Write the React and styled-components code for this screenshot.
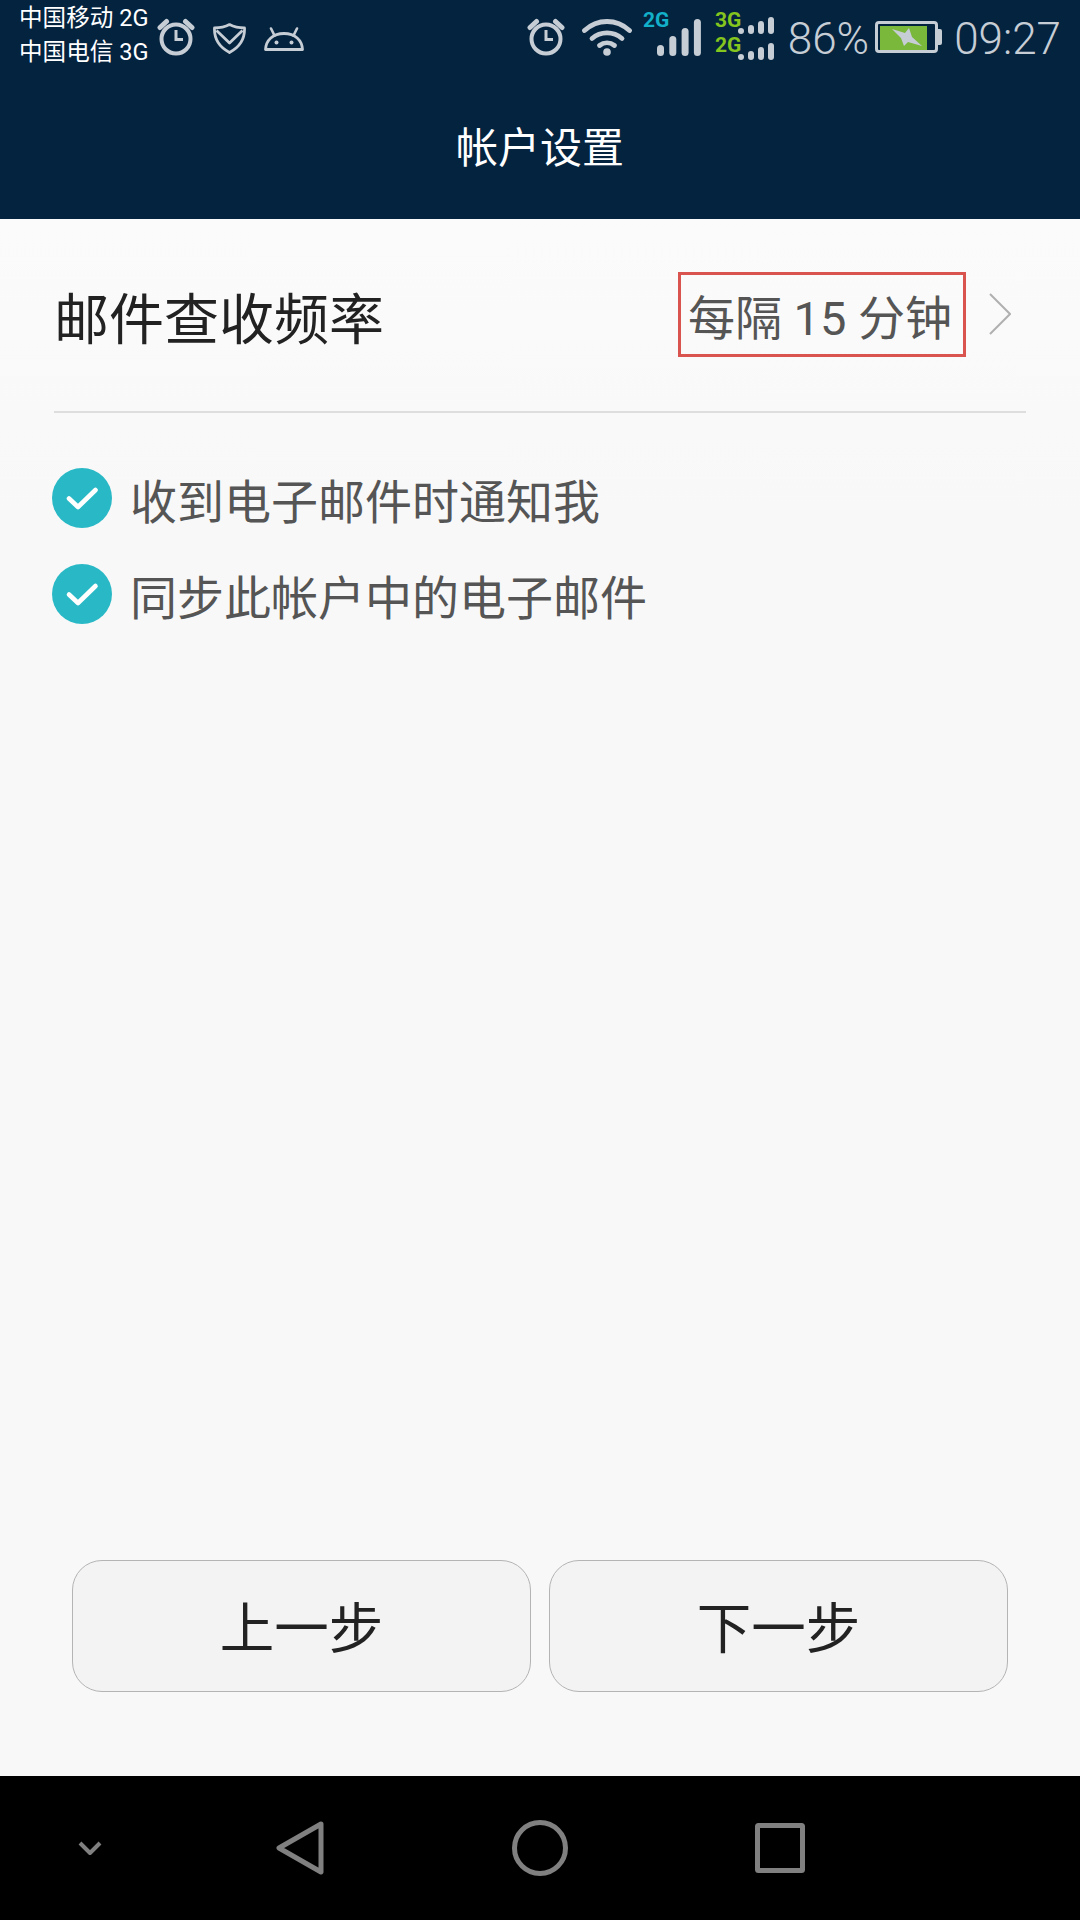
import React from 'react';
import styled, { createGlobalStyle } from 'styled-components';

const GlobalStyle = createGlobalStyle`
  html, body {
    margin: 0;
    padding: 0;
    background: #000;
  }
  body {
    font-family: Roboto, "Noto Sans CJK SC", sans-serif;
  }
`;

const Page = styled.div`
  width: 1080px;
  height: 1920px;
  display: flex;
  flex-direction: column;
  overflow: hidden;
`;

const Header = styled.header`
  height: 219px;
  flex: none;
  background: #04233f;
  color: #fff;
`;

const StatusBar = styled.div`
  height: 80px;
  box-sizing: border-box;
  padding: 0 19px;
  display: flex;
  justify-content: space-between;
  align-items: flex-start;
  color: #c6cdd5;
`;

const StatusGroup = styled.div`
  display: flex;
  align-items: flex-start;
`;

const Carriers = styled.div`
  width: 129px;
  margin-top: 1px;
  margin-right: 9px;
  color: #fff;
  font-size: 23.6px;
  line-height: 34px;
  white-space: nowrap;
`;

const StatusIcon = styled.svg`
  display: block;
  flex: none;
  margin-top: ${p => p.$top}px;
  margin-left: ${p => p.$left || 0}px;
`;

const StatusText = styled.div`
  margin-top: 15px;
  margin-left: ${p => p.$left || 0}px;
  font-size: 44px;
  line-height: 48px;
  font-weight: 300;
  white-space: nowrap;
`;

const Title = styled.h1`
  margin: 0;
  height: 128px;
  display: flex;
  align-items: center;
  justify-content: center;
  font-size: 42px;
  font-weight: 400;
`;

const Content = styled.main`
  flex: 1;
  display: flex;
  flex-direction: column;
  background: linear-gradient(#fbfbfb, #f8f8f8 300px);
`;

const FrequencyRow = styled.div`
  height: 194px;
  box-sizing: border-box;
  margin: 0 54px;
  border-bottom: 2px solid #dedede;
  display: flex;
  align-items: center;
  justify-content: space-between;
  padding: 0 15px 1px 0;
`;

const RowLabel = styled.div`
  font-size: 55px;
  color: #222;
`;

const RowValue = styled.div`
  display: flex;
  align-items: center;
  gap: 23px;
`;

const ValueBox = styled.div`
  width: 288px;
  height: 85px;
  box-sizing: border-box;
  border: 3px solid #d9534f;
  padding-right: 4px;
  display: flex;
  align-items: center;
  justify-content: center;
  font-size: 47px;
  color: #555;
  white-space: pre;
`;

const Chevron = styled.svg`
  display: block;
  margin-top: -2px;
`;

const Options = styled.div`
  padding: 37px 0 0 52px;
`;

const Option = styled.div`
  height: 96px;
  display: flex;
  align-items: center;
  gap: 18px;
  font-size: 47px;
  color: #555;
`;

const Footer = styled.div`
  margin-top: auto;
  padding: 0 72px 84px;
  display: flex;
  gap: 18px;
`;

const StepButton = styled.button`
  flex: 1;
  height: 132px;
  box-sizing: border-box;
  border: 1.5px solid #b4b4b4;
  border-radius: 30px;
  background: #f3f3f3;
  color: #222;
  font-family: inherit;
  font-size: 54.5px;
  padding: 0 0 4px;
`;

const NavBar = styled.nav`
  height: 144px;
  flex: none;
  background: #000;
  display: flex;
  align-items: center;
  color: #808080;
  padding-left: 77px;
`;

const NavIcon = styled.svg`
  display: block;
  flex: none;
  margin-left: ${p => p.$left || 0}px;
`;

const AlarmIcon = props => (
  <StatusIcon width="38" height="38" viewBox="0 0 38 38" fill="none" stroke="currentColor" {...props}>
    <circle cx="19" cy="21" r="14.5" strokeWidth="4" />
    <path d="M19 12v9.5h7" strokeWidth="3" />
    <path d="M3 9.5 9.5 3.5M35 9.5 28.5 3.5" strokeWidth="5" strokeLinecap="round" />
  </StatusIcon>
);

const ShieldIcon = props => (
  <StatusIcon width="33" height="31" viewBox="0 0 33 31" fill="none" stroke="currentColor" strokeWidth="2.8" strokeLinejoin="round" {...props}>
    <path d="M16.5 1.6C22 4.500 27 5 31.500 5c.4 9.500-3.500 18.500-15 24.500C5 23.500 1.100 14.500 1.500 5 6 5 11 4.500 16.500 1.600Z" />
    <path d="M3.500 7.500 16.500 20 29.500 7.500" />
  </StatusIcon>
);

const AndroidIcon = props => (
  <StatusIcon width="40" height="24" viewBox="0 0 40 24" fill="none" {...props}>
    <path d="M1.500 22.500C2 13 9 6.500 20 6.500s18 6.500 18.500 16Z" stroke="currentColor" strokeWidth="2.800" strokeLinejoin="round" />
    <path d="M10.500 8.500 7 1.500M29.500 8.500 33 1.500" stroke="currentColor" strokeWidth="2.600" strokeLinecap="round" />
    <circle cx="12.500" cy="15.500" r="2" fill="currentColor" />
    <circle cx="27.500" cy="15.500" r="2" fill="currentColor" />
  </StatusIcon>
);

const WifiIcon = props => (
  <StatusIcon width="50" height="37" viewBox="0 0 50 37" fill="none" stroke="currentColor" strokeWidth="4.800" strokeLinecap="round" {...props}>
    <path d="M2.500 11.500C15.500-0.500 34.500-0.500 47.500 11.500" />
    <path d="M10 19.500C18.500 12 31.500 12 40 19.500" />
    <path d="M17.500 26.500C22 23 28 23 32.500 26.500" />
    <circle cx="25" cy="33" r="3.800" fill="currentColor" stroke="none" />
  </StatusIcon>
);

const SignalLabel = styled.text`
  font-family: Roboto, sans-serif;
  font-size: 21px;
  font-weight: 700;
  fill: ${p => p.$color};
`;

const Bars = ({ x, bottom, width, step, heights }) =>
  heights.map((h, i) => (
    <rect
      key={i}
      x={x + i * step}
      y={bottom - h}
      width={width}
      height={h}
      rx={width / 2}
      fill="currentColor"
    />
  ));

const SingleSignal = props => (
  <StatusIcon width="58" height="48" viewBox="0 0 58 48" {...props}>
    <SignalLabel x="0" y="19" $color="#12b0c9">2G</SignalLabel>
    <Bars x={14} bottom={48} width={7} step={12.300} heights={[11, 20, 28, 37]} />
  </StatusIcon>
);

const DualSignal = props => (
  <StatusIcon width="60" height="52" viewBox="0 0 60 52" {...props}>
    <SignalLabel x="0" y="19" $color="#84c51e">3G</SignalLabel>
    <SignalLabel x="0" y="44" $color="#84c51e">2G</SignalLabel>
    <Bars x={23} bottom={26} width={6} step={10} heights={[6, 9, 13, 17]} />
    <Bars x={23} bottom={52} width={6} step={10} heights={[6, 9, 13, 17]} />
  </StatusIcon>
);

const BatteryIcon = props => (
  <StatusIcon width="67" height="32" viewBox="0 0 67 32" {...props}>
    <rect x="1.500" y="1.500" width="60" height="29" rx="2.500" fill="none" stroke="currentColor" strokeWidth="3" />
    <rect x="5" y="5" width="47" height="24" fill="#7ab83c" />
    <path d="M63 8h2a2 2 0 0 1 2 2v12a2 2 0 0 1-2 2h-2Z" fill="currentColor" />
    <path d="M17 8 30 12 34 7 37 16 47 25 33 21 29 25 26 17Z" fill="currentColor" />
  </StatusIcon>
);

const CheckMark = () => (
  <svg width="60" height="60" viewBox="0 0 60 60" style={{ display: 'block', flex: 'none' }}>
    <circle cx="30" cy="30" r="30" fill="#29b9c6" />
    <path d="M17 30.500 26 39 43.500 22" fill="none" stroke="#fff" strokeWidth="4.600" strokeLinecap="round" strokeLinejoin="round" />
  </svg>
);

export default function App() {
  return (
    <Page>
      <GlobalStyle />
      <Header>
        <StatusBar>
          <StatusGroup>
            <Carriers>
              <div>中国移动 2G</div>
              <div>中国电信 3G</div>
            </Carriers>
            <AlarmIcon $top={18} />
            <ShieldIcon $top={23} $left={18} />
            <AndroidIcon $top={27} $left={18} />
          </StatusGroup>
          <StatusGroup>
            <AlarmIcon $top={18} />
            <WifiIcon $top={19} $left={17} />
            <SingleSignal $top={8} $left={11} />
            <DualSignal $top={8} $left={14} />
            <StatusText $left={13}>86%</StatusText>
            <BatteryIcon $top={21} $left={6} />
            <StatusText $left={12}>09:27</StatusText>
          </StatusGroup>
        </StatusBar>
        <Title>帐户设置</Title>
      </Header>
      <Content>
        <FrequencyRow>
          <RowLabel>邮件查收频率</RowLabel>
          <RowValue>
            <ValueBox>每隔 15 分钟</ValueBox>
            <Chevron width="22" height="42" viewBox="0 0 22 42" fill="none" stroke="#b0b0b0" strokeWidth="2">
              <path d="M1 1 21 21 1 41" />
            </Chevron>
          </RowValue>
        </FrequencyRow>
        <Options>
          <Option>
            <CheckMark />
            收到电子邮件时通知我
          </Option>
          <Option>
            <CheckMark />
            同步此帐户中的电子邮件
          </Option>
        </Options>
        <Footer>
          <StepButton>上一步</StepButton>
          <StepButton>下一步</StepButton>
        </Footer>
      </Content>
      <NavBar>
        <NavIcon width="26" height="16" viewBox="0 0 26 16" fill="none" stroke="currentColor" strokeWidth="4" strokeLinejoin="round">
          <path d="M3 3 13 13 23 3" />
        </NavIcon>
        <NavIcon $left={173} width="48" height="54" viewBox="0 0 48 54" fill="none" stroke="currentColor" strokeWidth="5" strokeLinejoin="round">
          <path d="M45 3 3 27 45 51Z" />
        </NavIcon>
        <NavIcon $left={188} width="56" height="56" viewBox="0 0 56 56" fill="none" stroke="currentColor" strokeWidth="5">
          <circle cx="28" cy="28" r="25.500" />
        </NavIcon>
        <NavIcon $left={187} width="50" height="50" viewBox="0 0 50 50" fill="none" stroke="currentColor" strokeWidth="5" strokeLinejoin="round">
          <rect x="2.500" y="2.500" width="45" height="45" rx="1" />
        </NavIcon>
      </NavBar>
    </Page>
  );
}
